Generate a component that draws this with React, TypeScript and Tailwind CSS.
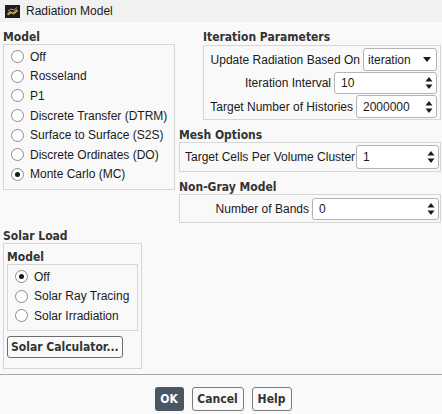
import React from 'react';

const sans = 'font-["Liberation_Sans","Noto_Sans",sans-serif]';
const bold = 'font-["DejaVu_Sans_Condensed","DejaVu_Sans",sans-serif] font-bold';

function Radio({ label, checked }: { label: string; checked?: boolean }) {
  return (
    <div className="flex h-[19.6px] items-center gap-[6px]">
      <span className="flex h-[13px] w-[13px] items-center justify-center rounded-full border border-[#8c8c8c] bg-white">
        {checked && <span className="h-[5px] w-[5px] rounded-full bg-[#1a1a1a]" />}
      </span>
      <span className="text-[12px] leading-none text-[#1a1a1a]">{label}</span>
    </div>
  );
}

function Heading({ children, className = '' }: { children: React.ReactNode; className?: string }) {
  return <div className={`${bold} h-[12px] text-[12px] leading-none text-[#333] ${className}`}>{children}</div>;
}

function Spin({ value, width, height = 22 }: { value: string; width: number; height?: number }) {
  return (
    <div
      className="flex items-center justify-between rounded-[3px] border border-[#b4b4b4] bg-white pl-[6px] pr-[3px]"
      style={{ width, height }}
    >
      <span className="text-[12px] leading-none text-[#1a1a1a]">{value}</span>
      <svg width="8" height="14" viewBox="0 0 8 14">
        <path d="M4 1 L7.5 5.5 L0.5 5.5 Z" fill="#1a1a1a" />
        <path d="M4 13 L7.5 8.5 L0.5 8.5 Z" fill="#1a1a1a" />
      </svg>
    </div>
  );
}

function Field({ label, children }: { label: string; children: React.ReactNode }) {
  return (
    <div className="flex items-center justify-end gap-[3px]">
      <span className="text-[12px] leading-none text-[#1a1a1a]">{label}</span>
      {children}
    </div>
  );
}

function TitleIcon() {
  return (
    <svg width="15" height="13" viewBox="0 0 15 13">
      <rect width="15" height="13" fill="#1c1c1c" />
      <path d="M2 9 L5 6 L8 7.5 L12 4 L13 6 L9 9.5 L6 8.5 L3 10.5 Z" fill="#c9a23a" />
      <path d="M3 6 L6 4 L9 5 L12 2.5" stroke="#e0c060" strokeWidth="0.8" fill="none" />
    </svg>
  );
}

export default function App() {
  return (
    <div className={`${sans} flex h-[414px] w-[442px] flex-col overflow-hidden bg-[#f9f9f9]`}>
      <div className="flex h-[22px] shrink-0 items-center gap-[6px] bg-[#f1f1f1] pl-[5px]">
        <TitleIcon />
        <span className="text-[12px] text-[#1a1a1a]">Radiation Model</span>
      </div>

      <div className="flex items-start">
        <div className="ml-[3px] w-[172px]">
          <Heading className="mt-[9px] mb-[1px]">Model</Heading>
          <div className="h-[146px] border border-[#d6d6d6] pl-[7px] pt-[2px]">
            <Radio label="Off" />
            <Radio label="Rosseland" />
            <Radio label="P1" />
            <Radio label="Discrete Transfer (DTRM)" />
            <Radio label="Surface to Surface (S2S)" />
            <Radio label="Discrete Ordinates (DO)" />
            <Radio label="Monte Carlo (MC)" checked />
          </div>
        </div>

        <div className="ml-[4px] flex w-[262px] flex-col">
          <div className="ml-[24px]">
            <Heading className="mt-[9px] mb-[2px]">Iteration Parameters</Heading>
            <div className="flex h-[75px] flex-col gap-[1px] border border-[#d6d6d6] pr-[3px] pt-[2px]">
              <Field label="Update Radiation Based On">
                <div className="flex h-[23px] w-[74px] items-center justify-between rounded-[3px] border border-[#b4b4b4] bg-white pl-[4px] pr-[5px]">
                  <span className="text-[12px] leading-none text-[#1a1a1a]">iteration</span>
                  <svg width="8" height="5" viewBox="0 0 8 5">
                    <path d="M0 0 L8 0 L4 5 Z" fill="#1a1a1a" />
                  </svg>
                </div>
              </Field>
              <Field label="Iteration Interval">
                <Spin value="10" width={103} />
              </Field>
              <Field label="Target Number of Histories">
                <Spin value="2000000" width={81} height={23} />
              </Field>
            </div>
          </div>

          <Heading className="mt-[9px] mb-[1px]">Mesh Options</Heading>
          <div className="flex h-[30px] items-center border border-[#d6d6d6] pr-[1px]">
            <div className="flex w-full items-center justify-between pl-[5px]">
              <span className="text-[12px] leading-none text-[#1a1a1a]">Target Cells Per Volume Cluster</span>
              <Spin value="1" width={83} height={24} />
            </div>
          </div>

          <Heading className="mt-[9px] mb-[1px]">Non-Gray Model</Heading>
          <div className="flex h-[29px] items-center border border-[#d6d6d6] pr-[1px]">
            <div className="flex w-full items-center justify-end">
              <Field label="Number of Bands">
                <Spin value="0" width={127} />
              </Field>
            </div>
          </div>
        </div>
      </div>

      <div className="ml-[3px] w-[139px]">
        <Heading className="mt-[7px] mb-[1px]">Solar Load</Heading>
        <div className="h-[126px] border border-[#d6d6d6] px-[3px]">
          <Heading className="mt-[7px] mb-[1px]">Model</Heading>
          <div className="h-[67px] border border-[#d6d6d6] pl-[7px] pt-[2px]">
            <Radio label="Off" checked />
            <Radio label="Solar Ray Tracing" />
            <Radio label="Solar Irradiation" />
          </div>
          <button className={`${bold} mt-[5px] h-[22px] rounded-[3px] border border-[#6e6e6e] bg-[#fafafa] px-[3px] text-[12px] text-[#333]`}>
            Solar Calculator...
          </button>
        </div>
      </div>

      <div className="mt-[5px] h-px shrink-0 bg-[#a8a8a8]" />

      <div className="mt-[12px] flex justify-center gap-[8px] pl-[4px]">
        <button className={`${bold} h-[24px] w-[29px] rounded-[3px] bg-[#4b5663] text-[12px] text-white`}>OK</button>
        <button className={`${bold} h-[24px] w-[52px] rounded-[3px] border border-[#7a7a7a] bg-[#fafafa] text-[12px] text-[#333]`}>
          Cancel
        </button>
        <button className={`${bold} h-[24px] w-[40px] rounded-[3px] border border-[#7a7a7a] bg-[#fafafa] text-[12px] text-[#333]`}>
          Help
        </button>
      </div>
    </div>
  );
}
